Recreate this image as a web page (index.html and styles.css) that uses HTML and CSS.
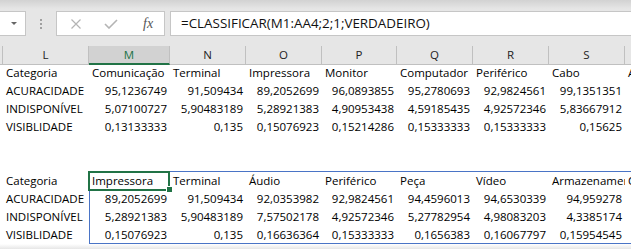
FILE: index.html
```html
<!DOCTYPE html>
<html lang="pt">
<head>
    <meta charset="UTF-8">
    <title>Planilha</title>
    <link rel="stylesheet" href="styles.css">
</head>
<body>
    <div class="formula-bar">
        <div class="name-box"><span class="caret"></span></div>
        <div class="grip"><i></i><i></i><i></i></div>
        <div class="fx-box">
            <svg class="icon-x" width="10" height="10" viewBox="0 0 10 10"><path d="M0.5 0.5 L9.5 9.5 M9.5 0.5 L0.5 9.5" stroke="#b4b4b4" stroke-width="1.2" fill="none"/></svg>
            <svg class="icon-ok" width="14" height="10" viewBox="0 0 14 10"><path d="M1 5 L5 9 L13 1" stroke="#b4b4b4" stroke-width="1.6" fill="none"/></svg>
            <span class="fx">fx</span>
        </div>
        <div class="formula">=CLASSIFICAR(M1:AA4;2;1;VERDADEIRO)</div>
    </div>

    <div class="sheet">
        <div class="row head">
            <div class="hd"></div>
            <div class="hd">L</div>
            <div class="hd sel">M</div>
            <div class="hd">N</div>
            <div class="hd">O</div>
            <div class="hd">P</div>
            <div class="hd">Q</div>
            <div class="hd">R</div>
            <div class="hd">S</div>
            <div class="hd">T</div>
        </div>

        <div class="row">
            <div></div>
            <div class="c">Categoria</div>
            <div class="c">Comunicação</div>
            <div class="c">Terminal</div>
            <div class="c">Impressora</div>
            <div class="c">Monitor</div>
            <div class="c">Computador</div>
            <div class="c">Periférico</div>
            <div class="c">Cabo</div>
            <div class="c">Armazenamento</div>
        </div>
        <div class="row">
            <div></div>
            <div class="c">ACURACIDADE</div>
            <div class="c n">95,1236749</div>
            <div class="c n">91,509434</div>
            <div class="c n">89,2052699</div>
            <div class="c n">96,0893855</div>
            <div class="c n">95,2780693</div>
            <div class="c n">92,9824561</div>
            <div class="c n">99,1351351</div>
            <div class="c n">94,959278</div>
        </div>
        <div class="row">
            <div></div>
            <div class="c">INDISPONÍVEL</div>
            <div class="c n">5,07100727</div>
            <div class="c n">5,90483189</div>
            <div class="c n">5,28921383</div>
            <div class="c n">4,90953438</div>
            <div class="c n">4,59185435</div>
            <div class="c n">4,92572346</div>
            <div class="c n">5,83667912</div>
            <div class="c n">4,3385174</div>
        </div>
        <div class="row">
            <div></div>
            <div class="c">VISIBLIDADE</div>
            <div class="c n">0,13133333</div>
            <div class="c n">0,135</div>
            <div class="c n">0,15076923</div>
            <div class="c n">0,15214286</div>
            <div class="c n">0,15333333</div>
            <div class="c n">0,15333333</div>
            <div class="c n">0,15625</div>
            <div class="c n">0,15954545</div>
        </div>

        <div class="blank"></div>

        <div class="spill">
            <div class="spill-range"></div>
            <div class="row">
                <div></div>
                <div class="c">Categoria</div>
                <div class="c active">Impressora</div>
                <div class="c">Terminal</div>
                <div class="c">Áudio</div>
                <div class="c">Periférico</div>
                <div class="c">Peça</div>
                <div class="c">Vídeo</div>
                <div class="c">Armazenamento</div>
                <div class="c">Comunicação</div>
            </div>
            <div class="row">
                <div></div>
                <div class="c">ACURACIDADE</div>
                <div class="c n">89,2052699</div>
                <div class="c n">91,509434</div>
                <div class="c n">92,0353982</div>
                <div class="c n">92,9824561</div>
                <div class="c n">94,4596013</div>
                <div class="c n">94,6530339</div>
                <div class="c n">94,959278</div>
                <div class="c n">95,1236749</div>
            </div>
            <div class="row">
                <div></div>
                <div class="c">INDISPONÍVEL</div>
                <div class="c n">5,28921383</div>
                <div class="c n">5,90483189</div>
                <div class="c n">7,57502178</div>
                <div class="c n">4,92572346</div>
                <div class="c n">5,27782954</div>
                <div class="c n">4,98083203</div>
                <div class="c n">4,3385174</div>
                <div class="c n">5,07100727</div>
            </div>
            <div class="row">
                <div></div>
                <div class="c">VISIBLIDADE</div>
                <div class="c n">0,15076923</div>
                <div class="c n">0,135</div>
                <div class="c n">0,16636364</div>
                <div class="c n">0,15333333</div>
                <div class="c n">0,1656383</div>
                <div class="c n">0,16067797</div>
                <div class="c n">0,15954545</div>
                <div class="c n">0,13133333</div>
            </div>
        </div>
        <div class="footer"></div>
    </div>
</body>
</html>
```

FILE: styles.css
```css
body {
    margin: 0;
    width: 631px;
    height: 249px;
    overflow: hidden;
    background-color: #fff;
    font-family: "Open Sans", "Liberation Sans", sans-serif;
    color: #000;
}
.formula-bar {
    display: flex;
    align-items: flex-start;
    height: 46px;
    padding-top: 11px;
    box-sizing: border-box;
    background: linear-gradient(#d2d2d2, #e6e6e6 9px, #e6e6e6);
}
.name-box {
    width: 26px;
    height: 25px;
    box-sizing: border-box;
    background: #fff;
    border: 1px solid #c6c6c6;
    border-left: none;
    display: flex;
    align-items: center;
    justify-content: flex-end;
    padding-right: 8px;
}
.name-box .caret {
    border-left: 3px solid transparent;
    border-right: 3px solid transparent;
    border-top: 3px solid #666;
}
.grip {
    width: 30px;
    display: flex;
    flex-direction: column;
    align-items: center;
    gap: 2px;
    padding-top: 8px;
}
.grip i {
    width: 2px;
    height: 2px;
    background: #a0a0a0;
}
.fx-box {
    width: 109px;
    height: 25px;
    box-sizing: border-box;
    background: #fff;
    border: 1px solid #c6c6c6;
    display: flex;
    align-items: center;
    padding-left: 14px;
}
.fx-box .icon-ok {
    margin-left: 23px;
}
.fx-box .fx {
    margin-left: 25px;
    font-family: "Liberation Serif", serif;
    font-style: italic;
    font-size: 14px;
    color: #555;
}
.formula {
    flex: 1;
    height: 25px;
    box-sizing: border-box;
    margin-left: 5px;
    background: #fff;
    border: 1px solid #c6c6c6;
    border-right: none;
    padding-left: 10px;
    font-size: 13.4px;
    line-height: 23px;
    color: #111;
    white-space: nowrap;
}
.sheet {
    width: 720px;
}
.row {
    display: grid;
    grid-template-columns: 3px 86px 81px 76px 76px 75px 76px 76px 76px 76px;
    height: 18px;
}
.head {
    background: #e6e6e6;
}
.head .hd {
    border-right: 1px solid #c0c0c0;
    border-bottom: 1px solid #c0c0c0;
    text-align: center;
    font-size: 11.5px;
    line-height: 17px;
    color: #222;
}
.head .hd.sel {
    background: #d2d2d2;
    color: #217346;
    border-bottom: 2px solid #217346;
}
.c {
    padding: 0 2px 0 3px;
    font-size: 11.5px;
    line-height: 18px;
    white-space: nowrap;
    overflow: hidden;
}
.c.n {
    text-align: right;
    padding: 0 3px 0 0;
}
.blank {
    height: 36px;
}
.spill {
    position: relative;
}
.spill-range {
    position: absolute;
    left: 89px;
    top: -1px;
    bottom: 0;
    right: -10px;
    border: 1px solid #4a74c6;
}
.c.active {
    position: relative;
    overflow: visible;
}
.c.active::after {
    content: "";
    position: absolute;
    top: -1px;
    left: -1px;
    right: 0;
    bottom: -1px;
    border: 2px solid #217346;
}
.c.active::before {
    content: "";
    position: absolute;
    right: -2px;
    bottom: -2px;
    width: 5px;
    height: 5px;
    background: #217346;
    box-shadow: -1px -1px 0 #fff;
    z-index: 1;
}
.footer {
    height: 5px;
    background: linear-gradient(#fff, #e6e6e6);
}
```
